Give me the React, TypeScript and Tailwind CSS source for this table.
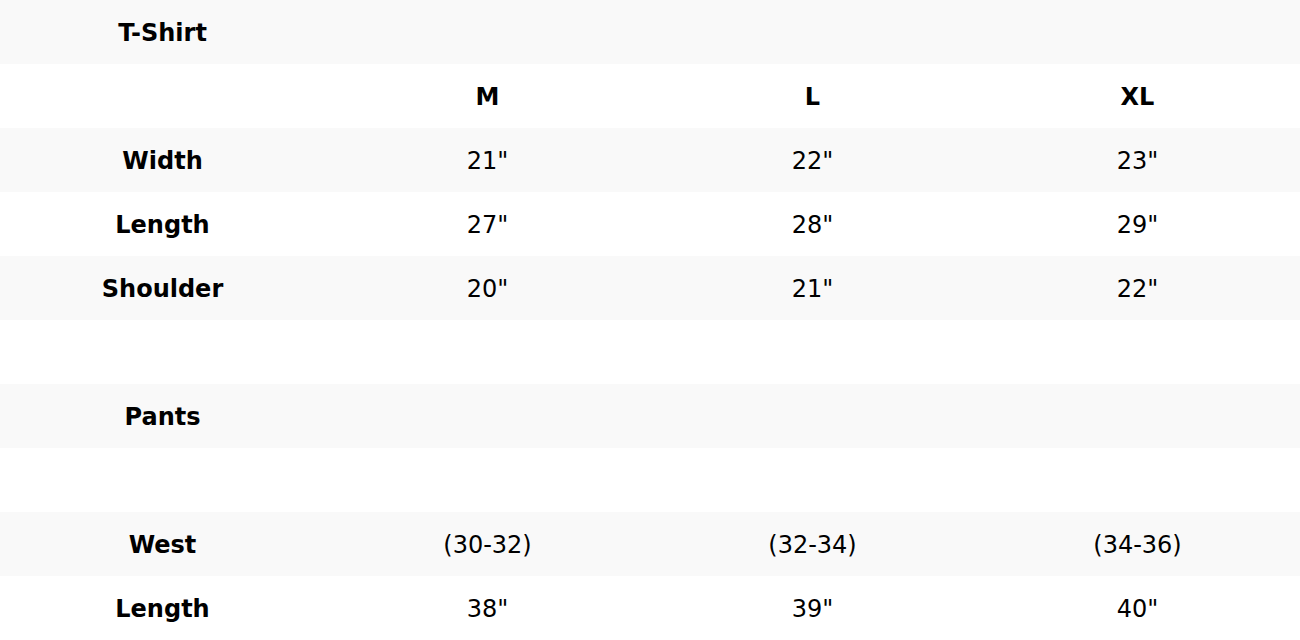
import React from 'react';

type Row = { label?: string; cells?: string[]; head?: boolean };

const rows: Row[] = [
  { label: 'T-Shirt' },
  { cells: ['M', 'L', 'XL'], head: true },
  { label: 'Width', cells: ['21"', '22"', '23"'] },
  { label: 'Length', cells: ['27"', '28"', '29"'] },
  { label: 'Shoulder', cells: ['20"', '21"', '22"'] },
  {},
  { label: 'Pants' },
  {},
  { label: 'West', cells: ['(30-32)', '(32-34)', '(34-36)'] },
  { label: 'Length', cells: ['38"', '39"', '40"'] },
];

export default function App() {
  return (
    <div className="w-[1300px] h-[640px] bg-white text-black font-['DejaVu_Sans',sans-serif] text-[24px]">
      <table className="w-full table-fixed border-collapse">
        <tbody>
          {rows.map((r, i) => (
            <tr key={i} className={i % 2 === 0 ? 'bg-[#f9f9f9]' : 'bg-white'}>
              <td className="h-16 p-0 pt-0.5 text-center font-bold">{r.label ?? ''}</td>
              {[0, 1, 2].map((c) => (
                <td key={c} className={`h-16 p-0 pt-0.5 text-center ${r.head ? 'font-bold' : ''}`}>
                  {r.cells?.[c] ?? ''}
                </td>
              ))}
            </tr>
          ))}
        </tbody>
      </table>
    </div>
  );
}
